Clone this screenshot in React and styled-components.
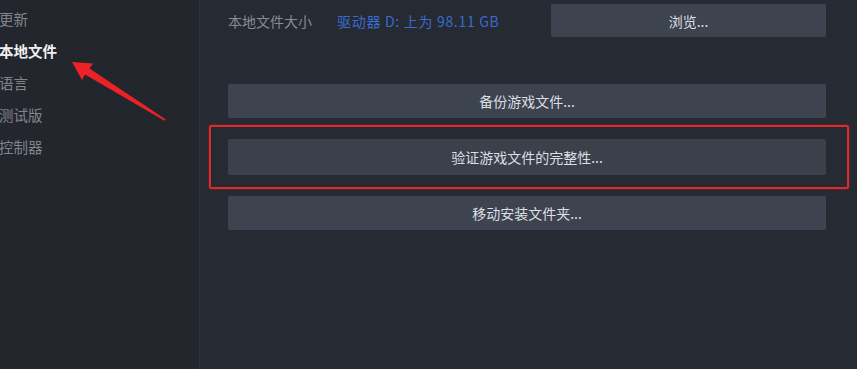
import React from "react";
import styled, { createGlobalStyle } from "styled-components";

const Global = createGlobalStyle`
  html, body { margin: 0; padding: 0; background: #24272e; }
  body { font-family: "Noto Sans CJK SC", "Noto Sans", sans-serif; }
  #root { width: 857px; height: 369px; overflow: hidden; }
`;

const Page = styled.div`
  position: relative;
  display: flex;
  width: 857px;
  height: 369px;
  background: #262a32;
`;

const Sidebar = styled.nav`
  width: 200px;
  flex-shrink: 0;
  background: #23262d;
  padding-top: 3px;
  display: flex;
  flex-direction: column;
  box-shadow: inset -1px 0 0 #2b2f37;
`;

const NavItem = styled.div`
  height: 32px;
  line-height: 32px;
  font-size: 14.5px;
  margin-left: -1px;
  color: ${(p) => (p.$active ? "#f0f0f0" : "#80858d")};
  font-weight: ${(p) => (p.$active ? 700 : 400)};
`;

const Content = styled.main`
  flex: 1;
  padding: 4px 31px 0 28px;
  display: flex;
  flex-direction: column;
`;

const InfoRow = styled.div`
  display: flex;
  align-items: center;
  height: 33px;
`;

const Label = styled.span`
  font-size: 14px;
  color: #878c95;
  width: 109px;
`;

const Value = styled.span`
  font-size: 14px;
  letter-spacing: 0.7px;
  color: #3a6bd0;
  flex: 1;
`;

const Button = styled.div`
  height: ${(p) => p.$h || 34}px;
  width: ${(p) => (p.$w ? `${p.$w}px` : "auto")};
  background: ${(p) => p.$bg || "#3e444f"};
  border-radius: 2px;
  display: flex;
  align-items: center;
  justify-content: center;
  font-size: 14px;
  color: #dcdee2;
`;

const ButtonList = styled.div`
  margin-top: 47px;
  display: flex;
  flex-direction: column;
  gap: 21px;
`;

const Highlight = styled.div`
  position: absolute;
  left: 209px;
  top: 125px;
  width: 636px;
  height: 60px;
  border: 2px solid #e2282d;
  border-radius: 2px;
  box-shadow: 0 0 2px rgba(226, 40, 45, 0.6);
  pointer-events: none;
`;

const Arrow = styled.svg`
  position: absolute;
  left: 0;
  top: 0;
  pointer-events: none;
`;

export default function App() {
  return (
    <>
      <Global />
      <Page>
        <Sidebar>
          <NavItem>更新</NavItem>
          <NavItem $active>本地文件</NavItem>
          <NavItem>语言</NavItem>
          <NavItem>测试版</NavItem>
          <NavItem>控制器</NavItem>
        </Sidebar>
        <Content>
          <InfoRow>
            <Label>本地文件大小</Label>
            <Value>驱动器 D: 上为 98.11 GB</Value>
            <Button $w={275} $h={33}>浏览...</Button>
          </InfoRow>
          <ButtonList>
            <Button>备份游戏文件...</Button>
            <Button $bg="#3b414b" $h={36}>验证游戏文件的完整性...</Button>
            <Button>移动安装文件夹...</Button>
          </ButtonList>
        </Content>
        <Highlight />
        <Arrow width="200" height="140" viewBox="0 0 200 140">
          <polygon
            points="72,62 93,63.5 89.5,68.5 165.5,119.2 164.5,120.8 85,74.5 82,80"
            fill="#ec2226"
          />
        </Arrow>
      </Page>
    </>
  );
}
